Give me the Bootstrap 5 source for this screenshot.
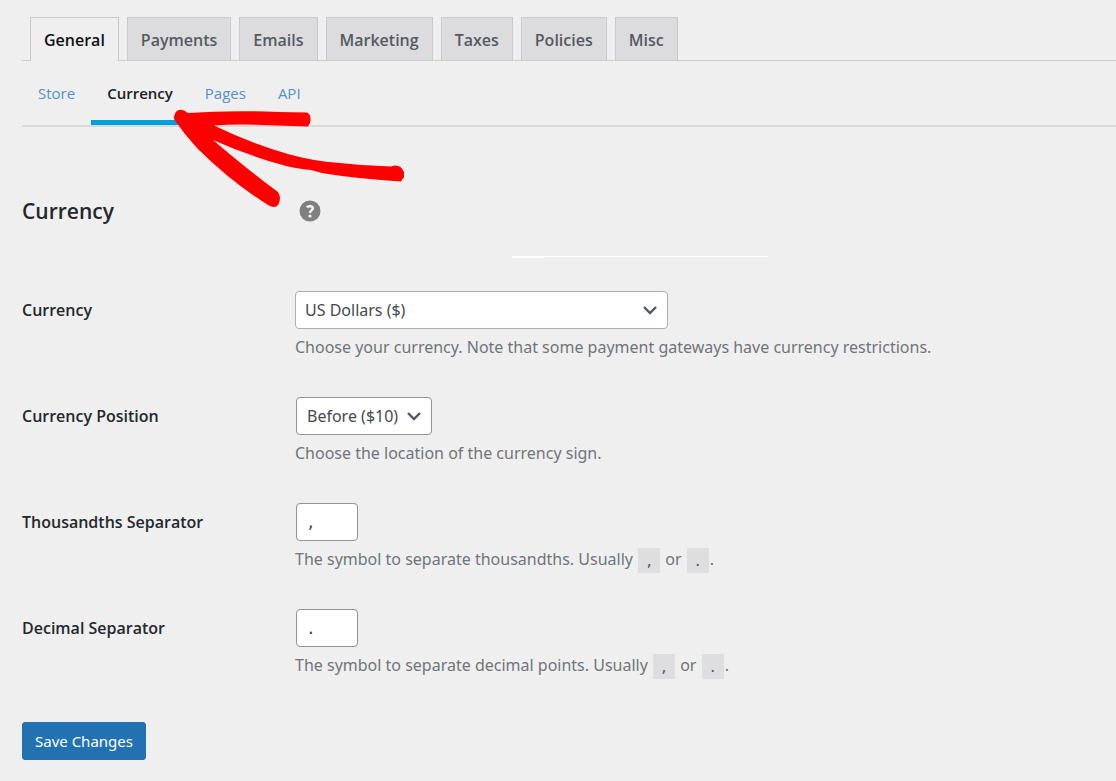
<!DOCTYPE html>
<html lang="en">
<head>
<meta charset="utf-8">
<meta name="viewport" content="width=device-width, initial-scale=1">
<title>Settings - Currency</title>
<link href="https://cdn.jsdelivr.net/npm/bootstrap@5.3.0/dist/css/bootstrap.min.css" rel="stylesheet">
<style>
  body { background: #efefef; color: #23282d; font-family: "Open Sans", "Noto Sans", sans-serif; font-size: 16px; line-height: 24px; }
  .settings-page { padding: 17px 0 20px 22px; }

  .main-tabs { border-bottom: 1px solid #cbccce; padding-left: 8px; gap: 8px; }
  .main-tabs .nav-link { border: 1px solid #c8c9cd; border-bottom: 0; border-radius: 0; background: #dcdcde; color: #555a61; font-weight: 600; padding: 10px 13px 8px; height: 43px; }
  .main-tabs .nav-link.active { background: #efefef; color: #111; margin-bottom: -1px; height: 44px; }

  .sub-tabs { border-bottom: 2px solid #d9d9da; font-size: 15px; }
  .sub-tabs .nav-link { color: #5590c4; padding: 20px 16px 15px; border-bottom: 5px solid transparent; }
  .sub-tabs .nav-link.active { color: #1d2023; font-weight: 600; border-bottom-color: #00a0d5; }
  .pointer-arrow { position: absolute; left: 150px; top: 46px; pointer-events: none; }

  .section-head { margin-top: 69px; }
  .section-head h2 { font-size: 21px; line-height: 30px; font-weight: 600; margin: 0; }
  .name-col { flex: 0 0 273px; }
  .help-btn { width: 22px; height: 22px; margin-left: 4px; }
  .faint-rule { width: 256px; height: 1px; background: #fff; margin: 30px 0 0 490px; }
  .faint-rule::before { content: ""; display: block; width: 32px; height: 2px; background: #fff; }

  .field-list { margin-top: 34px; display: grid; gap: 38px; }
  .field-row .name-col { font-weight: 600; padding-top: 7px; }
  .field-row .form-select, .field-row .form-control { height: 38px; border: 1px solid #8f9297; border-radius: 4px; background-color: #fff; color: #45494d; font-family: "Noto Sans", sans-serif; font-size: 16px; line-height: 24px; padding: 6px 9px; }
  .field-row .form-select { background-image: url("data:image/svg+xml,%3csvg xmlns='http://www.w3.org/2000/svg' viewBox='0 0 16 16'%3e%3cpath fill='none' stroke='%2350575e' stroke-width='2.4' d='m2 5 6 6 6-6'/%3e%3c/svg%3e"); background-size: 16px 16px; background-position: right 9px center; }
  .field-row .wide-select { width: 373px; max-width: 100%; border-color: #a9b0b7; }
  .field-row .short-select { width: 136px; padding: 6px 10px; margin-left: 1px; }
  .field-row .tiny-input { width: 62px; margin-left: 1px; font-family: "DejaVu Sans Mono", monospace; }
  .hint { color: #6f757b; font-family: "Noto Sans", sans-serif; margin: 6px 0 0; }
  .hint code { display: inline-block; width: 22px; height: 25px; line-height: 27px; text-align: center; background: #dedee0; color: #555a60; font-family: "DejaVu Sans Mono", monospace; font-size: 14px; margin: -4px 1px; vertical-align: middle; }
  .save-btn { margin-top: 45px; height: 38px; padding: 6px 12px; border: 1px solid #2271b1; border-radius: 3px; background: #2271b1; color: #fff; font-family: "Noto Sans", sans-serif; font-size: 15px; line-height: 24px; }
</style>
</head>
<body>
<main class="settings-page">
  <nav class="main-tabs nav flex-nowrap" aria-label="Settings">
    <a class="nav-link active" href="#" aria-current="page">General</a>
    <a class="nav-link" href="#">Payments</a>
    <a class="nav-link" href="#">Emails</a>
    <a class="nav-link" href="#">Marketing</a>
    <a class="nav-link" href="#">Taxes</a>
    <a class="nav-link" href="#">Policies</a>
    <a class="nav-link" href="#">Misc</a>
  </nav>
  <nav class="sub-tabs nav position-relative" aria-label="General settings">
    <a class="nav-link" href="#">Store</a>
    <a class="nav-link active" href="#" aria-current="page">Currency</a>
    <a class="nav-link" href="#">Pages</a>
    <a class="nav-link" href="#">API</a>
    <svg class="pointer-arrow" width="236" height="104" viewBox="172 107 236 104" aria-hidden="true">
      <path fill="#f00" d="M174 119C174 112 178 109 182 110C185 110 187 113 188 113Q230 110 278 112L307 112.500Q312 115 310 123L308 126.500L262 125Q235 124 214 125.500Q250 143 288 154Q312 161 340 163Q365 166 391 166.500Q400 163 404 172V177L401 181.500Q360 179 328 174L322 173L311 170Q300 169 286 166Q249 156 213 140Q248 170 278 192Q282 198 278 205Q275 209 268 205Q231 182 197 148Q184 134 174 119Z"/>
    </svg>
  </nav>

  <header class="section-head d-flex align-items-center">
    <h2 class="name-col">Currency</h2>
    <button type="button" class="help-btn btn p-0 border-0 d-flex" aria-label="Help">
      <svg width="22" height="22" viewBox="0 0 22 22" aria-hidden="true"><circle cx="11" cy="11" r="10.500" fill="#808080"/><path d="M7.800 7.300C9 5.800 13.800 5.400 13.800 8.300C13.800 10.400 11 10.400 11 13" fill="none" stroke="#f4f4f4" stroke-width="2.500"/><circle cx="11" cy="16" r="1.600" fill="#f4f4f4"/></svg>
    </button>
  </header>
  <div class="faint-rule"></div>

  <form onsubmit="return false">
    <div class="field-list">
      <div class="field-row d-flex">
        <label class="name-col" for="currency">Currency</label>
        <div class="flex-grow-1">
          <select id="currency" class="form-select wide-select"><option>US Dollars ($)</option></select>
          <p class="hint">Choose your currency. Note that some payment gateways have currency restrictions.</p>
        </div>
      </div>
      <div class="field-row d-flex">
        <label class="name-col" for="position">Currency Position</label>
        <div class="flex-grow-1">
          <select id="position" class="form-select short-select"><option>Before ($10)</option></select>
          <p class="hint">Choose the location of the currency sign.</p>
        </div>
      </div>
      <div class="field-row d-flex">
        <label class="name-col" for="thousands">Thousandths Separator</label>
        <div class="flex-grow-1">
          <input id="thousands" type="text" class="form-control tiny-input" value=",">
          <p class="hint">The symbol to separate thousandths. Usually <code>,</code> or <code>.</code>.</p>
        </div>
      </div>
      <div class="field-row d-flex">
        <label class="name-col" for="decimal">Decimal Separator</label>
        <div class="flex-grow-1">
          <input id="decimal" type="text" class="form-control tiny-input" value=".">
          <p class="hint">The symbol to separate decimal points. Usually <code>,</code> or <code>.</code>.</p>
        </div>
      </div>
    </div>
    <button type="submit" class="btn save-btn">Save Changes</button>
  </form>
</main>
<script src="https://cdn.jsdelivr.net/npm/bootstrap@5.3.0/dist/js/bootstrap.bundle.min.js"></script>
</body>
</html>
